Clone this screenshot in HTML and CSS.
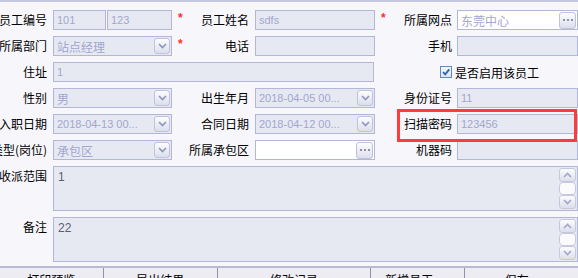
FILE: index.html
```html
<!DOCTYPE html>
<html lang="zh-CN">
<head>
    <meta charset="UTF-8">
    <title>员工资料</title>
    <link rel="stylesheet" href="styles.css">
</head>
<body>
<div class="form">
    <div class="grid">
        <!-- row 1 -->
        <label class="lbl">员工编号</label>
        <div class="pair">
            <div class="inp">101</div>
            <div class="inp">123</div>
        </div>
        <span class="star">*</span>
        <label class="lbl">员工姓名</label>
        <div class="inp">sdfs</div>
        <span class="star">*</span>
        <label class="lbl l3">所属网点</label>
        <div class="inp white"><span class="cn">东莞中心</span><span class="btn dots"><i></i><i></i><i></i></span></div>

        <!-- row 2 -->
        <label class="lbl">所属部门</label>
        <div class="inp"><span class="cn">站点经理</span><span class="btn"><svg width="9" height="6" viewBox="0 0 9 6"><path d="M1 1L4.5 4.5L8 1" fill="none" stroke="#9196c2" stroke-width="1.7"/></svg></span></div>
        <span class="star">*</span>
        <label class="lbl">电话</label>
        <div class="inp"></div>
        <span></span>
        <label class="lbl l3">手机</label>
        <div class="inp"></div>

        <!-- row 3 -->
        <label class="lbl">住址</label>
        <div class="inp wide">1</div>
        <label class="chk"><span class="box"><svg width="10" height="10" viewBox="0 0 10 10"><path d="M2 5L4.2 7.3L8.3 2.4" fill="none" stroke="#2e62ad" stroke-width="1.8"/></svg></span>是否启用该员工</label>

        <!-- row 4 -->
        <label class="lbl">性别</label>
        <div class="inp"><span class="cn">男</span><span class="btn"><svg width="9" height="6" viewBox="0 0 9 6"><path d="M1 1L4.5 4.5L8 1" fill="none" stroke="#9196c2" stroke-width="1.7"/></svg></span></div>
        <span></span>
        <label class="lbl">出生年月</label>
        <div class="inp">2018-04-05 00...<span class="btn"><svg width="9" height="6" viewBox="0 0 9 6"><path d="M1 1L4.5 4.5L8 1" fill="none" stroke="#9196c2" stroke-width="1.7"/></svg></span></div>
        <span></span>
        <label class="lbl l3">身份证号</label>
        <div class="inp">11</div>

        <!-- row 5 -->
        <label class="lbl">入职日期</label>
        <div class="inp">2018-04-13 00...<span class="btn"><svg width="9" height="6" viewBox="0 0 9 6"><path d="M1 1L4.5 4.5L8 1" fill="none" stroke="#9196c2" stroke-width="1.7"/></svg></span></div>
        <span></span>
        <label class="lbl">合同日期</label>
        <div class="inp">2018-04-12 00...<span class="btn"><svg width="9" height="6" viewBox="0 0 9 6"><path d="M1 1L4.5 4.5L8 1" fill="none" stroke="#9196c2" stroke-width="1.7"/></svg></span></div>
        <span></span>
        <label class="lbl l3">扫描密码</label>
        <div class="inp">123456</div>

        <!-- row 6 -->
        <label class="lbl">类型(岗位)</label>
        <div class="inp"><span class="cn">承包区</span><span class="btn"><svg width="9" height="6" viewBox="0 0 9 6"><path d="M1 1L4.5 4.5L8 1" fill="none" stroke="#9196c2" stroke-width="1.7"/></svg></span></div>
        <span></span>
        <label class="lbl">所属承包区</label>
        <div class="inp white"><span class="btn dots"><i></i><i></i><i></i></span></div>
        <span></span>
        <label class="lbl l3">机器码</label>
        <div class="inp"></div>

        <!-- memo rows -->
        <label class="lbl top">收派范围</label>
        <div class="memo">1
            <div class="sbar">
                <span class="sbtn"><svg width="9" height="6" viewBox="0 0 9 6"><path d="M1 5L4.5 1.5L8 5" fill="none" stroke="#a3a7cc" stroke-width="1.7"/></svg></span>
                <span class="thumb"></span>
                <span class="track"></span>
                <span class="sbtn"><svg width="9" height="6" viewBox="0 0 9 6"><path d="M1 1L4.5 4.5L8 1" fill="none" stroke="#a3a7cc" stroke-width="1.7"/></svg></span>
            </div>
        </div>

        <label class="lbl top">备注</label>
        <div class="memo">22
            <div class="sbar">
                <span class="sbtn"><svg width="9" height="6" viewBox="0 0 9 6"><path d="M1 5L4.5 1.5L8 5" fill="none" stroke="#a3a7cc" stroke-width="1.7"/></svg></span>
                <span class="thumb"></span>
                <span class="track"></span>
                <span class="sbtn"><svg width="9" height="6" viewBox="0 0 9 6"><path d="M1 1L4.5 4.5L8 1" fill="none" stroke="#a3a7cc" stroke-width="1.7"/></svg></span>
            </div>
        </div>
    </div>

    <!-- highlight round the scan password -->
    <div class="mark"></div>

    <div class="bar">
        <span class="cell c1">打印预览</span>
        <span class="cell c2">导出结果</span>
        <span class="cell c3">修改记录</span>
        <span class="cell c4">新增员工</span>
        <span class="cell c5">保存</span>
    </div>
</div>
</body>
</html>
```

FILE: styles.css
```css
/* --- page --- */
body {
    margin: 0;
    width: 578px; height: 278px;
    overflow: hidden;
    background: #f7f7fb;
    font-family: "Noto Sans CJK SC", sans-serif;
    font-size: 12px;
    color: #000;
}

.form {
    position: relative;
    border-top: 2px solid #c5c8e0;
    padding-top: 8px;
}

/* --- field grid --- */
.grid {
    display: grid;
    grid-template-columns: 53px 119px 18px 65px 120px 22px 60px 121px;
    grid-template-rows: repeat(6, 20px) 45px 45px;
    row-gap: 6px;
}

.lbl {
    display: flex; justify-content: flex-end; align-items: center;
    height: 20px;
    padding-right: 6px;
    white-space: nowrap;
    line-height: 1;
}
.lbl.l3 { padding-right: 5px; }
.lbl.top { align-self: start; }

.star {
    color: #ff2d2d;
    font: bold 12px/12px "Liberation Sans", sans-serif;
    padding-left: 6px;
    padding-top: 2px;
}

/* --- inputs --- */
.inp {
    box-sizing: border-box;
    height: 20px;
    display: flex; align-items: center;
    padding: 0 1px 0 3px;
    border: 1px solid #b2b6d8;
    background: #e7e9f2;
    color: #a2a6cf;
    font: 11px "Liberation Sans", "Noto Sans CJK SC", sans-serif;
    white-space: nowrap;
    overflow: hidden;
}
.inp.white { background: #fff; }
.inp.wide { grid-column: 2 / 6; margin-right: 1px; }
.inp .cn { font-size: 12px; font-family: "Noto Sans CJK SC", sans-serif; }

.pair {
    display: grid;
    grid-template-columns: 53px 1fr;
    column-gap: 1px;
}

.btn {
    box-sizing: border-box;
    margin-left: auto;
    width: 16px; height: 16px;
    display: flex; align-items: center; justify-content: center;
    border: 1px solid #bfc2da;
    border-radius: 3px;
    background: linear-gradient(#fdfdfe, #dcdeeb);
}
.btn.dots { gap: 2px; width: 17px; height: 17px; align-items: center; }
.btn.dots i {
    width: 2px; height: 2px;
    background: #8c90b0;
}

/* --- checkbox --- */
.chk {
    grid-column: 6 / 9;
    display: flex; align-items: center; gap: 3px;
    padding-left: 65px;
    white-space: nowrap;
}
.chk .box {
    box-sizing: border-box;
    width: 12px; height: 12px;
    display: flex; align-items: center; justify-content: center;
    border: 1px solid #5a8ccc;
    background: linear-gradient(#f3f6fb, #dfe7f3);
}

/* --- memo boxes --- */
.memo {
    grid-column: 2 / 9;
    position: relative;
    box-sizing: border-box;
    border: 1px solid #b2b6d8;
    background: #e7e9f2;
    color: #5d5c70;
    font: 12px/15px "Liberation Sans", sans-serif;
    padding: 3px 4px;
}
.sbar {
    position: absolute; top: 1px; right: 1px; bottom: 1px;
    width: 17px;
    display: flex; flex-direction: column;
}
.sbtn, .thumb {
    box-sizing: border-box;
    height: 14px;
    display: flex; align-items: center; justify-content: center;
    border: 1px solid #c6c9de;
    border-radius: 3px;
    background: linear-gradient(#fcfcfe, #dcdeeb);
}
.thumb { background: #fbfbfd; border-radius: 4px; }
.track { flex: 1; }

/* --- red highlight --- */
.mark {
    position: absolute;
    left: 397px; top: 107px;
    width: 180px; height: 33px;
    box-sizing: border-box;
    border: 3px solid #ff3b3b;
}

/* --- bottom button strip --- */
.bar {
    margin-top: 4px;
    border-top: 2px solid #b8bbd4;
    display: flex;
    height: 20px;
    background: #ececf2;
}
.cell {
    box-sizing: border-box;
    display: flex; justify-content: center;
    padding-top: 3px;
    border-right: 1px solid #8f91ad;
    white-space: nowrap;
}
.c1 { width: 113px; }
.c2 { width: 125px; }
.c3 { width: 167px; }
.c4 { width: 101px; padding-right: 16px; }
.c5 { width: 120px; padding-left: 40px; justify-content: flex-start; border-right: none; }
```
